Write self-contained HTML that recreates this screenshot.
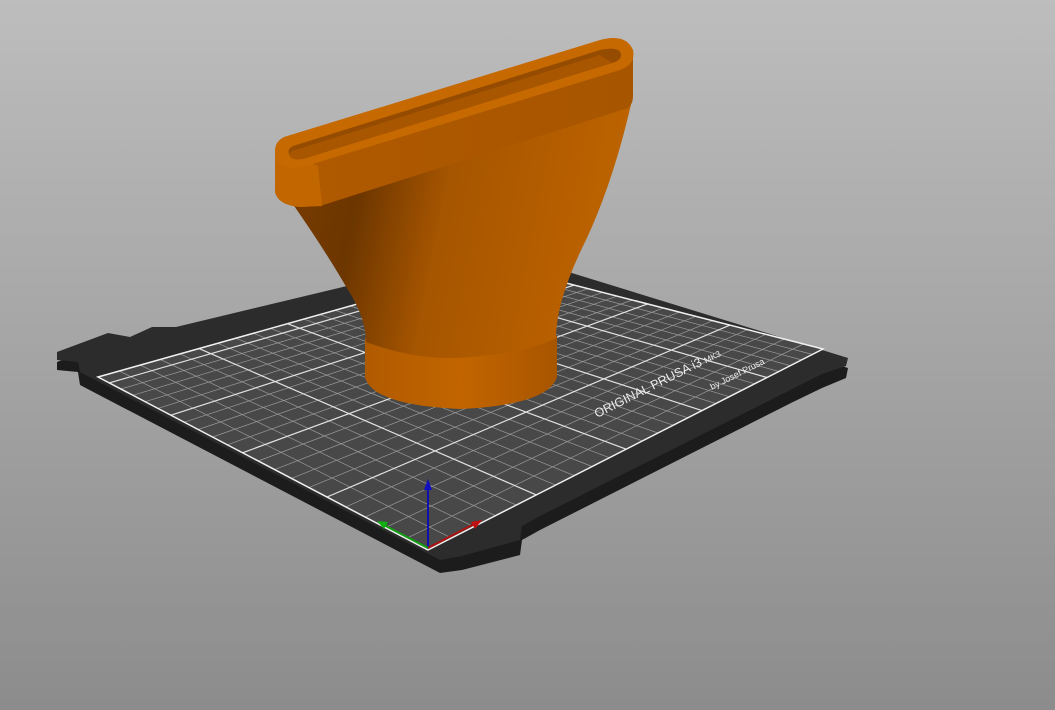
<!DOCTYPE html>
<html><head><meta charset="utf-8"><style>
html,body{margin:0;padding:0;width:1055px;height:710px;overflow:hidden;background:linear-gradient(#bcbcbc,#8c8c8c);}
svg{display:block}
</style></head><body>
<svg id="s" width="1055" height="710" viewBox="0 0 1055 710" xmlns="http://www.w3.org/2000/svg">
<defs>
<linearGradient id="bg" x1="0" y1="0" x2="0" y2="1"><stop offset="0" stop-color="#bdbdbd"/><stop offset="1" stop-color="#8c8c8c"/></linearGradient>
<linearGradient id="body" x1="0" y1="0" x2="1" y2="0.15"><stop offset="0" stop-color="#7a3c00"/><stop offset="0.25" stop-color="#6c3600"/><stop offset="0.5" stop-color="#a65500"/><stop offset="1" stop-color="#bd6300"/></linearGradient>
<linearGradient id="base" x1="0" y1="0" x2="1" y2="0"><stop offset="0" stop-color="#b05a00"/><stop offset="0.5" stop-color="#c26500"/><stop offset="1" stop-color="#a85500"/></linearGradient>
<linearGradient id="band" x1="0" y1="0" x2="1" y2="0"><stop offset="0" stop-color="#b05a00"/><stop offset="1" stop-color="#a85500"/></linearGradient>
</defs>
<rect width="1055" height="710" fill="url(#bg)"/>
<polygon transform="translate(0,10)" points="57,352 108,333 130,337 152,327 176,327 497,250 848,358 846,368 822,378 793,392 540,520 522,530 520,545 462,560 440,563 80,375 78,362 57,360" fill="#1c1c1c"/>
<polygon points="57,352 108,333 130,337 152,327 176,327 497,250 848,358 846,366 822,374 540,516 522,526 520,540 462,556 440,560 80,372 78,362 57,360" fill="#2c2c2c"/>
<g id="plate"></g>
<text x="0" y="0" transform="translate(597,418) rotate(-26.6)" font-family="Liberation Sans, sans-serif" font-size="12.5" fill="#ececec">ORIGINAL PRUSA i3 <tspan font-size="8.5">MK3</tspan></text>
<text x="0" y="0" transform="translate(712,390) rotate(-26.6)" font-family="Liberation Sans, sans-serif" font-size="9" fill="#ececec">by Josef Prusa</text>
<g stroke-width="2" fill="none">
<line x1="428" y1="548" x2="428" y2="486" stroke="#1010b0"/>
<line x1="428" y1="548" x2="476" y2="523" stroke="#b01010"/>
<line x1="428" y1="548" x2="382" y2="524" stroke="#10a010"/>
</g>
<polygon points="428,479 424,490 432,490" fill="#1010c0"/>
<polygon points="482,520 471,522 475,529" fill="#c01010"/>
<polygon points="377,521 384,529 388,522" fill="#10b010"/>
<path d="M365,338 L365,377 Q372,405 460,409 Q548,405 557,377 L557,336 Z" fill="url(#base)"/>
<path d="M290,200 Q325,250 348,290 Q366,318 366,342 Q420,362 470,357 Q530,352 556,338 Q556,300 586,240 Q614,180 632,100 L610,95 Z" fill="url(#body)"/>
<path d="M275,150 L275,192 Q278,205 300,207 L320,206 L628,108 Q633,104 633,96 L633,58 Z" fill="url(#band)"/>
<path d="M275,150 L275,192 Q278,205 300,207 L322,206 L318,166 Z" fill="#c26600"/>
<path d="M284,137 L600,40 Q626,33 633,50 Q636,64 620,70 L306,166 Q282,172 276,158 Q272,143 284,137 Z" fill="#c66900"/>
<path d="M293,146 L600,50 Q619,46 621,54 Q622,60 612,63 L306,158 Q291,162 289,154 Q287,149 293,146 Z" fill="#964c00"/>
<path d="M292,151 L600,55 L612,63 L306,158 Q291,162 289,154 Z" fill="#a85600"/>
</svg>
<script>
(function(){
var P=[[428,550],[823,349],[496,265],[98,377]];
var x0=P[0][0],y0=P[0][1],x1=P[1][0],y1=P[1][1],x2=P[2][0],y2=P[2][1],x3=P[3][0],y3=P[3][1];
var dx1=x1-x2,dx2=x3-x2,dx3=x0-x1+x2-x3,dy1=y1-y2,dy2=y3-y2,dy3=y0-y1+y2-y3;
var den=dx1*dy2-dx2*dy1;
var g=(dx3*dy2-dx2*dy3)/den,h=(dx1*dy3-dx3*dy1)/den;
var a=x1-x0+g*x1,b=x3-x0+h*x3,c=x0,d=y1-y0+g*y1,e=y3-y0+h*y3,f=y0;
function m(u,v){var w=g*u+h*v+1;return ((a*u+b*v+c)/w).toFixed(1)+","+((d*u+e*v+f)/w).toFixed(1);}
var s="";
s+='<polygon points="'+m(0,0)+' '+m(1,0)+' '+m(1,1)+' '+m(0,1)+'" fill="#484848"/>';
var minor="",major="";
for(var i=1;i<25;i++){var u=i/25;var l="M"+m(u,0)+"L"+m(u,1);if(i%5==0)major+=l;else minor+=l;}
for(var j=1;j<21;j++){var v=j/21;var l="M"+m(0,v)+"L"+m(1,v);if(j%5==0)major+=l;else minor+=l;}
s+='<path d="'+minor+'" stroke="#9a9a9a" stroke-width="0.7" fill="none"/>';
s+='<path d="'+major+'" stroke="#e2e2e2" stroke-width="1.2" fill="none"/>';
s+='<polygon points="'+m(0,0)+' '+m(1,0)+' '+m(1,1)+' '+m(0,1)+'" stroke="#f0f0f0" stroke-width="1.5" fill="none"/>';
document.getElementById("plate").innerHTML=s;
})();
</script>
</body></html>
